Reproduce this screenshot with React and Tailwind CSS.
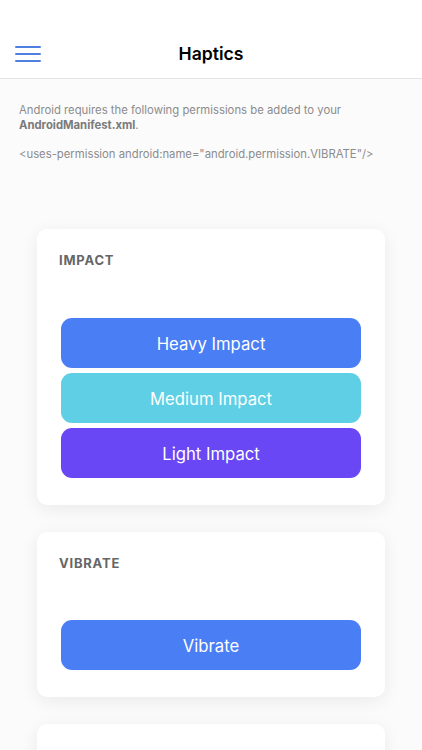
import React from "react";

function Btn({ color, children }) {
  return (
    <button
      className={`w-full h-[50px] pt-[3px] rounded-[11px] text-white text-[16.7px] flex items-center justify-center ${color}`}
    >
      {children}
    </button>
  );
}

export default function App() {
  return (
    <div
      className="min-h-[750px] w-[422px] bg-[#fbfbfb] overflow-hidden"
      style={{ fontFamily: "Inter, 'Noto Sans', sans-serif" }}
    >
      <header className="h-[79px] pt-[31px] bg-white border-b border-[#e6e6e6] relative flex items-center justify-center">
        <div className="absolute left-[15px] top-[46px] w-[26px] flex flex-col gap-[5px]">
          <span className="block h-[2px] bg-[#4f7fe0] rounded-full" />
          <span className="block h-[2px] bg-[#4f7fe0] rounded-full" />
          <span className="block h-[2px] bg-[#4f7fe0] rounded-full" />
        </div>
        <h1 className="text-[17.6px] font-semibold text-black">Haptics</h1>
      </header>

      <div className="px-[19px] pt-[24px] text-[11.3px] leading-[15px] text-[#8c8c8c]">
        <p>
          Android requires the following permissions be added to your{" "}
          <span className="font-bold text-[#7a7a7a]">AndroidManifest.xml</span>.
        </p>
        <p className="mt-[14px]">
          &lt;uses-permission android:name="android.permission.VIBRATE"/&gt;
        </p>
      </div>

      <div className="flex flex-col items-center gap-[27px] mt-[67px]">
        <section className="w-[348px] bg-white rounded-[10px] shadow-[0_4px_18px_rgba(0,0,0,0.07)] pt-[23px] pb-[27px]">
          <h2 className="px-[22px] text-[13px] leading-[16px] font-bold tracking-[0.06em] text-[#666]">
            IMPACT
          </h2>
          <div className="px-[24px] mt-[50px] flex flex-col gap-[5px]">
            <Btn color="bg-[#4a7ef4]">Heavy Impact</Btn>
            <Btn color="bg-[#5ecfe4]">Medium Impact</Btn>
            <Btn color="bg-[#6a47f4]">Light Impact</Btn>
          </div>
        </section>

        <section className="w-[348px] bg-white rounded-[10px] shadow-[0_4px_18px_rgba(0,0,0,0.07)] pt-[23px] pb-[27px]">
          <h2 className="px-[22px] text-[13px] leading-[16px] font-bold tracking-[0.06em] text-[#666]">
            VIBRATE
          </h2>
          <div className="px-[24px] mt-[49px] flex flex-col gap-[5px]">
            <Btn color="bg-[#4a7ef4]">Vibrate</Btn>
          </div>
        </section>

        <section className="w-[348px] h-[120px] bg-white rounded-[10px] shadow-[0_4px_18px_rgba(0,0,0,0.07)]" />
      </div>
    </div>
  );
}
